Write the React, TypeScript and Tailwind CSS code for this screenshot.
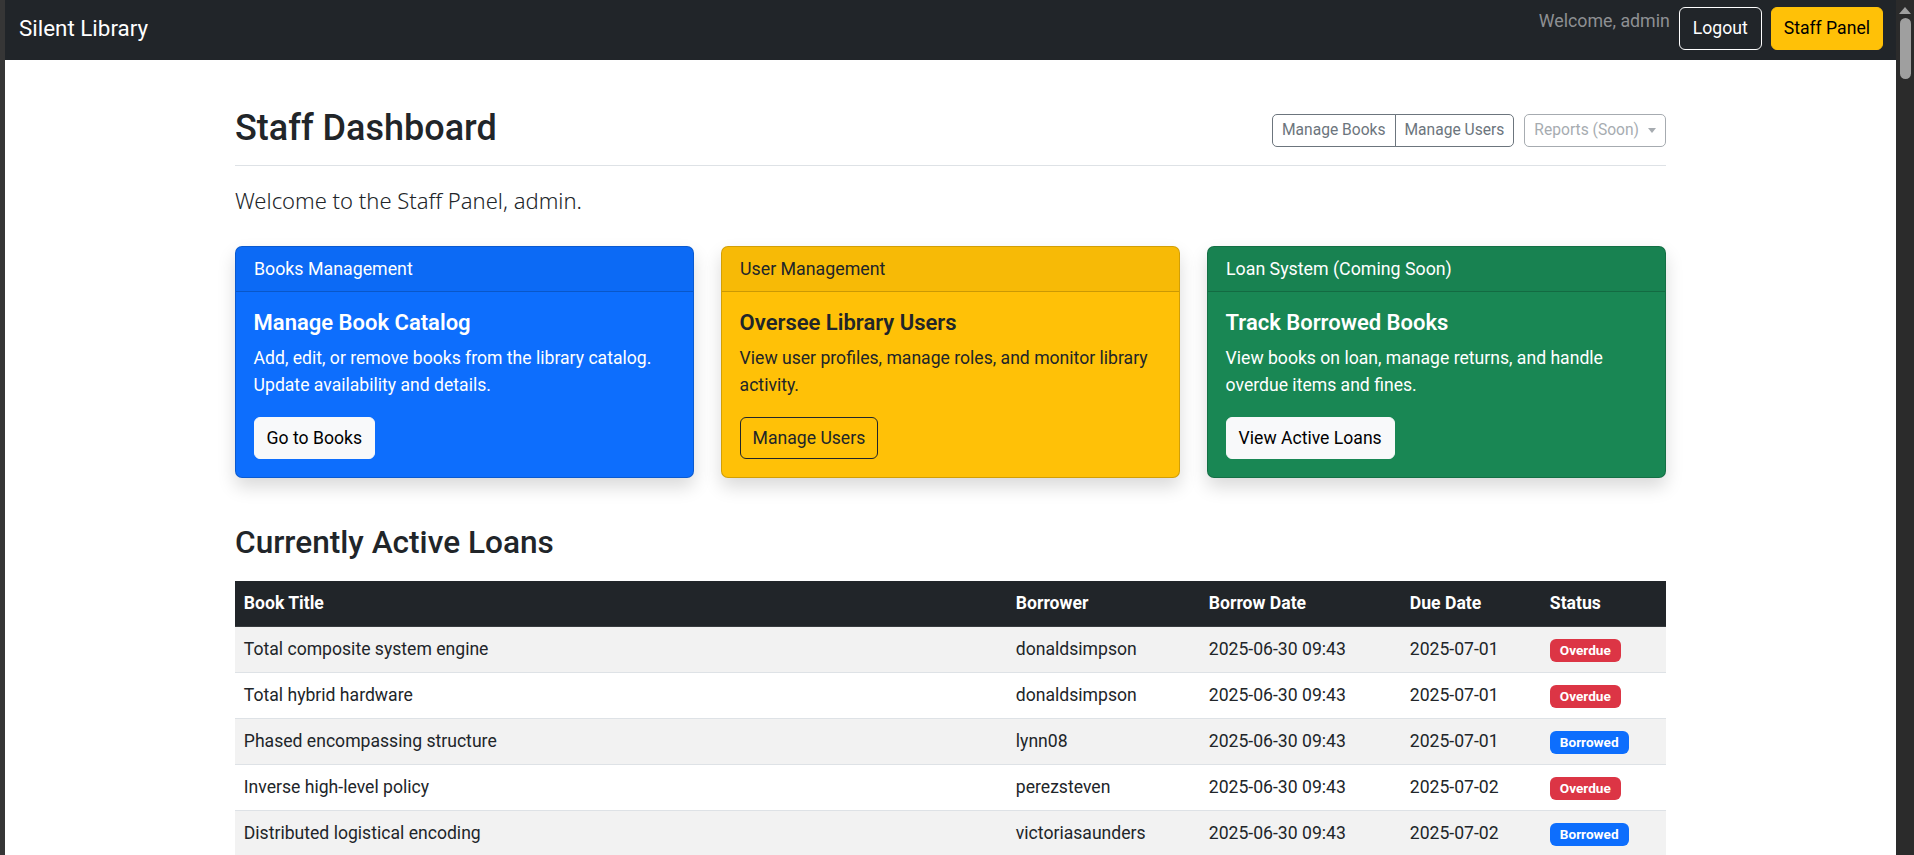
import React from "react";

type Loan = {
  title: string;
  borrower: string;
  borrowed: string;
  due: string;
  status: "Overdue" | "Borrowed";
};

const loans: Loan[] = [
  { title: "Total composite system engine", borrower: "donaldsimpson", borrowed: "2025-06-30 09:43", due: "2025-07-01", status: "Overdue" },
  { title: "Total hybrid hardware", borrower: "donaldsimpson", borrowed: "2025-06-30 09:43", due: "2025-07-01", status: "Overdue" },
  { title: "Phased encompassing structure", borrower: "lynn08", borrowed: "2025-06-30 09:43", due: "2025-07-01", status: "Borrowed" },
  { title: "Inverse high-level policy", borrower: "perezsteven", borrowed: "2025-06-30 09:43", due: "2025-07-02", status: "Overdue" },
  { title: "Distributed logistical encoding", borrower: "victoriasaunders", borrowed: "2025-06-30 09:43", due: "2025-07-02", status: "Borrowed" },
];

const cards = [
  {
    header: "Books Management",
    title: "Manage Book Catalog",
    text: "Add, edit, or remove books from the library catalog. Update availability and details.",
    button: "Go to Books",
    box: "bg-[#0d6efd] text-white",
    btn: "bg-[#f8f9fa] border-[#f8f9fa] text-black",
  },
  {
    header: "User Management",
    title: "Oversee Library Users",
    text: "View user profiles, manage roles, and monitor library activity.",
    button: "Manage Users",
    box: "bg-[#ffc107] text-[#212529]",
    btn: "bg-transparent border-[#212529] text-[#212529]",
  },
  {
    header: "Loan System (Coming Soon)",
    title: "Track Borrowed Books",
    text: "View books on loan, manage returns, and handle overdue items and fines.",
    button: "View Active Loans",
    box: "bg-[#198754] text-white",
    btn: "bg-[#f8f9fa] border-[#f8f9fa] text-black",
  },
];

function Navbar() {
  return (
    <nav className="flex h-[60px] items-start justify-between bg-[#212529] pl-[14px] pr-[13px]">
      <a className="mt-[13px] text-[22.4px] leading-[30px] text-white">Silent Library</a>
      <div className="flex items-start pt-[7px]">
        <span className="mr-[9px] mt-[2px] text-[17.8px] leading-[24px] text-[#8e9093]">Welcome, admin</span>
        <button className="h-[43px] rounded-[6px] border border-white px-[13px] text-[17.6px] text-white">Logout</button>
        <button className="ml-[9px] h-[43px] rounded-[6px] border border-[#ffc107] bg-[#ffc107] px-[12px] text-[17.6px] text-black">
          Staff Panel
        </button>
      </div>
    </nav>
  );
}

function Header() {
  return (
    <div className="flex items-center justify-between border-b border-[#dee2e6] pt-[47px] pb-[16px]">
      <h1 className="text-[36px] font-medium leading-[42px] text-[#212529]">Staff Dashboard</h1>
      <div className="mt-[5px] flex items-center">
        <div className="flex h-[33px] text-[15.6px] text-[#6c757d]">
          <button className="rounded-l-[5px] border border-[#6c757d] px-[9px]">Manage Books</button>
          <button className="-ml-px rounded-r-[5px] border border-[#6c757d] px-[9px]">Manage Users</button>
        </div>
        <button className="ml-[10px] flex h-[33px] items-center gap-[9px] rounded-[5px] border border-[#6c757d] px-[9px] text-[15.6px] text-[#6c757d] opacity-60">
          Reports (Soon)
          <span className="h-0 w-0 border-x-[4.5px] border-t-[5px] border-x-transparent border-t-[#6c757d]" />
        </button>
      </div>
    </div>
  );
}

function Card({ c }: { c: (typeof cards)[number] }) {
  return (
    <div className={`overflow-hidden rounded-[7px] border border-[rgba(0,0,0,0.175)] shadow-[0_9px_18px_rgba(0,0,0,0.15)] ${c.box}`}>
      <div className="border-b border-[rgba(0,0,0,0.175)] bg-[rgba(0,0,0,0.03)] px-[18px] py-[9px] text-[17.8px] leading-[26.4px]">
        {c.header}
      </div>
      <div className="p-[17.6px]">
        <h5 className="mb-[9px] text-[22px] font-semibold leading-[26.4px]">{c.title}</h5>
        <p className="mb-[18px] text-[17.6px] leading-[27px]">{c.text}</p>
        <button className={`h-[42px] rounded-[6px] border px-[12px] text-[17.6px] ${c.btn}`}>{c.button}</button>
      </div>
    </div>
  );
}

function LoansTable() {
  return (
    <table className="w-full table-fixed border-collapse text-left text-[17.6px] text-[#212529]">
      <colgroup>
        <col className="w-[772px]" />
        <col className="w-[193px]" />
        <col className="w-[201px]" />
        <col className="w-[140px]" />
        <col />
      </colgroup>
      <thead>
        <tr className="h-[45px] border-b border-[#373b3e] bg-[#212529] text-white">
          <th className="px-[8.8px] font-bold">Book Title</th>
          <th className="px-[8.8px] font-bold">Borrower</th>
          <th className="px-[8.8px] font-bold">Borrow Date</th>
          <th className="px-[8.8px] font-bold">Due Date</th>
          <th className="px-[8.8px] font-bold">Status</th>
        </tr>
      </thead>
      <tbody>
        {loans.map((l, i) => (
          <tr key={i} className={`h-[46px] border-b border-[#dee2e6] ${i % 2 === 0 ? "bg-[#f2f2f2]" : "bg-white"}`}>
            <td className="px-[8.8px]">{l.title}</td>
            <td className="px-[8.8px]">{l.borrower}</td>
            <td className="px-[8.8px]">{l.borrowed}</td>
            <td className="px-[8.8px]">{l.due}</td>
            <td className="px-[8.8px]">
              <span
                className={`inline-block rounded-[6px] px-[10px] py-[4.4px] text-[13.6px] font-bold leading-[13.6px] text-white ${
                  l.status === "Overdue" ? "bg-[#dc3545]" : "bg-[#0d6efd]"
                }`}
              >
                {l.status}
              </span>
            </td>
          </tr>
        ))}
      </tbody>
    </table>
  );
}

export default function App() {
  return (
    <div className="flex h-[855px] overflow-hidden bg-[#2b2b2b] font-['Roboto',sans-serif]">
      <div className="w-[5px] shrink-0 bg-[#363636]" />
      <div className="min-w-0 flex-1 overflow-hidden bg-white">
        <Navbar />
        <main className="mx-auto w-[1431px]">
          <Header />
          <p className="mt-[18px] font-['Noto_Sans',sans-serif] text-[22px] font-light leading-[33px] text-[#212529]">
            Welcome to the Staff Panel, admin.
          </p>
          <div className="mt-[29px] grid grid-cols-3 gap-[27px]">
            {cards.map((c) => (
              <Card key={c.header} c={c} />
            ))}
          </div>
          <h3 className="mt-[46px] mb-[20px] text-[31.6px] font-medium leading-[37px] text-[#212529]">Currently Active Loans</h3>
          <LoansTable />
        </main>
      </div>
      <div className="flex w-[18px] shrink-0 flex-col items-center bg-[#2b2b2b] pt-[7px]">
        <span className="h-0 w-0 border-x-[6px] border-b-[7px] border-x-transparent border-b-[#9f9f9f]" />
        <span className="mt-[4px] h-[61px] w-[11px] rounded-full bg-[#9f9f9f]" />
      </div>
    </div>
  );
}
